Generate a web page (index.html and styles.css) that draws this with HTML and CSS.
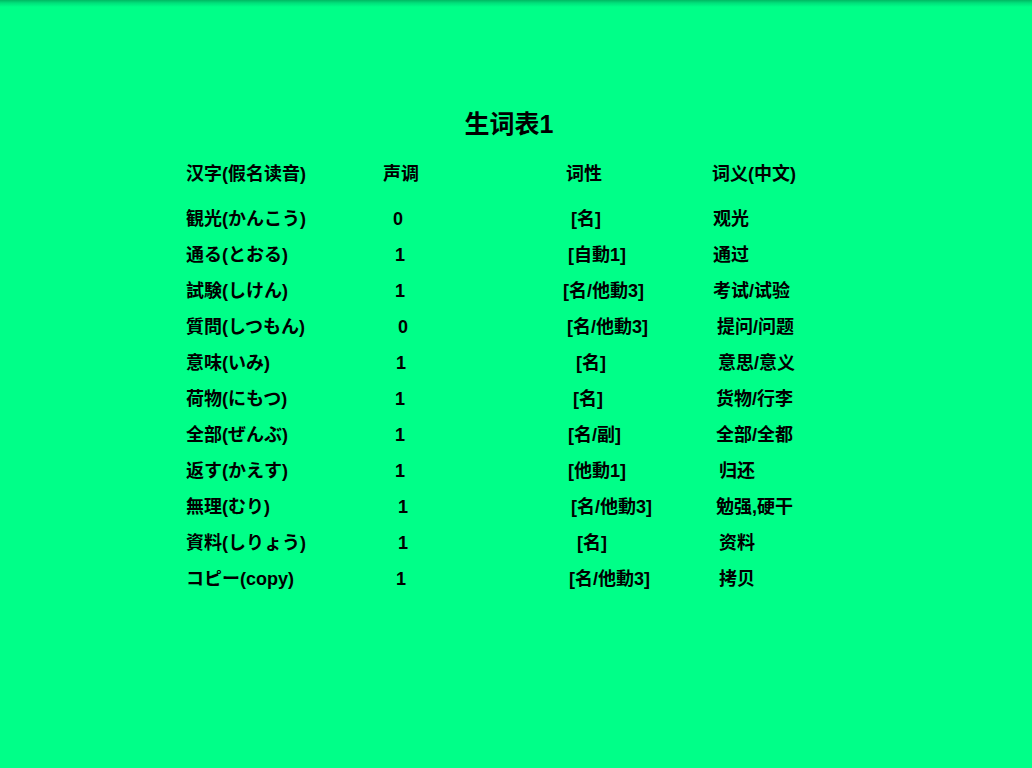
FILE: index.html
```html
<!DOCTYPE html>
<html lang="zh">
<head>
<meta charset="utf-8">
<title>生词表1</title>
<link rel="stylesheet" href="styles.css">
</head>
<body>
<div class="sheet">
  <h1 class="title">生词表1</h1>
  <div class="grid head">
    <div>汉字(假名读音)</div>
    <div>声调</div>
    <div class="o3">词性</div>
    <div>词义(中文)</div>
  </div>
  <div class="grid">
    <div>観光(かんこう)</div><div class="o10">0</div><div class="o8">[名]</div><div class="o1">观光</div>
    <div>通る(とおる)</div><div class="o12">1</div><div class="o5">[自動1]</div><div class="o1">通过</div>
    <div>試験(しけん)</div><div class="o12">1</div><div>[名/他動3]</div><div class="o1">考试/试验</div>
    <div>質問(しつもん)</div><div class="o15">0</div><div class="o4">[名/他動3]</div><div class="o5">提问/问题</div>
    <div>意味(いみ)</div><div class="o13">1</div><div class="o13">[名]</div><div class="o6">意思/意义</div>
    <div>荷物(にもつ)</div><div class="o12">1</div><div class="o10">[名]</div><div class="o4">货物/行李</div>
    <div>全部(ぜんぶ)</div><div class="o12">1</div><div class="o5">[名/副]</div><div class="o4">全部/全都</div>
    <div>返す(かえす)</div><div class="o12">1</div><div class="o5">[他動1]</div><div class="o7">归还</div>
    <div>無理(むり)</div><div class="o15">1</div><div class="o8">[名/他動3]</div><div class="o4">勉强,硬干</div>
    <div>資料(しりょう)</div><div class="o15">1</div><div class="o14">[名]</div><div class="o7">资料</div>
    <div>コピー(copy)</div><div class="o13">1</div><div class="o6">[名/他動3]</div><div class="o7">拷贝</div>
  </div>
</div>
</body>
</html>
```
FILE: styles.css
```css
html, body {
  margin: 0;
  padding: 0;
  height: 100%;
}
body {
  background: linear-gradient(to bottom, #00b862 0px, #00e07a 3px, #00ff88 7px) top left / 100% 7px no-repeat, #00ff88;
  font-family: "Liberation Sans", "Noto Sans CJK SC", sans-serif;
  font-weight: bold;
  color: #000;
}
.sheet {
  margin-left: 186px;
  width: 646px;
  padding-top: 109px;
}
.title {
  margin: 0 0 17px;
  font-size: 25px;
  line-height: 30px;
  text-align: center;
  font-weight: bold;
}
.grid {
  display: grid;
  grid-template-columns: 197px 180px 149px 1fr;
  font-size: 18px;
  grid-auto-rows: 36px;
  line-height: 36px;
  white-space: nowrap;
}
.head {
  margin-bottom: 9px;
}
.o1 { padding-left: 1px; }
.o3 { padding-left: 3px; }
.o4 { padding-left: 4px; }
.o5 { padding-left: 5px; }
.o6 { padding-left: 6px; }
.o7 { padding-left: 7px; }
.o8 { padding-left: 8px; }
.o10 { padding-left: 10px; }
.o12 { padding-left: 12px; }
.o13 { padding-left: 13px; }
.o14 { padding-left: 14px; }
.o15 { padding-left: 15px; }
```
